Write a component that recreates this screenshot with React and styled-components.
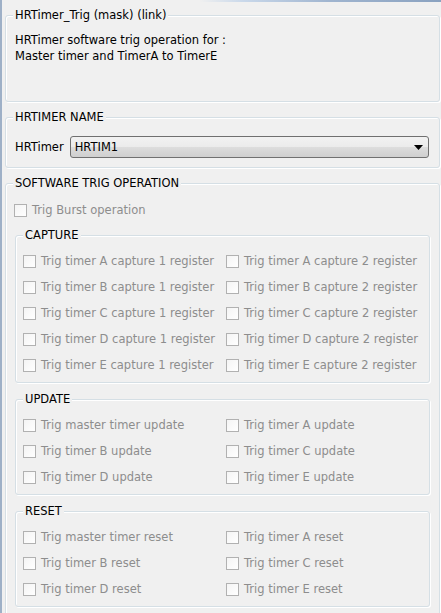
import React from 'react'
import styled, { createGlobalStyle } from 'styled-components'

const GlobalStyle = createGlobalStyle`
  html, body {
    margin: 0;
    padding: 0;
    background: #f0f0f0;
  }
  body {
    font-family: "DejaVu Sans", Tahoma, sans-serif;
    font-size: 11.5px;
    color: #000;
  }
`

const captureRows = ['A', 'B', 'C', 'D', 'E']

const updateItems = [
  'Trig master timer update',
  'Trig timer A update',
  'Trig timer B update',
  'Trig timer C update',
  'Trig timer D update',
  'Trig timer E update',
]

const resetItems = [
  'Trig master timer reset',
  'Trig timer A reset',
  'Trig timer B reset',
  'Trig timer C reset',
  'Trig timer D reset',
  'Trig timer E reset',
]

function Check({ label }) {
  return (
    <CheckRow>
      <Box />
      <CheckLabel>{label}</CheckLabel>
    </CheckRow>
  )
}

export default function App() {
  return (
    <>
      <GlobalStyle />
      <Frame>
        <FrameTop />
        <Page>
          <Group $pad="10px 9px 37px">
            <Title $offset={-2}>HRTimer_Trig (mask) (link)</Title>
            <Info>
              HRTimer software trig operation for :<br />
              Master timer and TimerA to TimerE
            </Info>
          </Group>

          <Group $pad="12px 10px 9px 9px">
            <Title $offset={-2}>HRTIMER NAME</Title>
            <NameRow>
              <span>HRTimer</span>
              <Combo>
                <span>HRTIM1</span>
                <svg width="9" height="5" viewBox="0 0 9 5">
                  <path d="M0 0h9L4.5 5z" fill="#000" />
                </svg>
              </Combo>
            </NameRow>
          </Group>

          <Group $pad="7px 8px 20px 8px" $last>
            <Title $offset={-1}>SOFTWARE TRIG OPERATION</Title>
            <Check label="Trig Burst operation" />

            <SubGroup>
              <Title>CAPTURE</Title>
              <Grid>
                {captureRows.map((t) => (
                  <React.Fragment key={t}>
                    <Check label={`Trig timer ${t} capture 1 register`} />
                    <Check label={`Trig timer ${t} capture 2 register`} />
                  </React.Fragment>
                ))}
              </Grid>
            </SubGroup>

            <SubGroup>
              <Title>UPDATE</Title>
              <Grid>
                {updateItems.map((l) => (
                  <Check key={l} label={l} />
                ))}
              </Grid>
            </SubGroup>

            <SubGroup>
              <Title>RESET</Title>
              <Grid>
                {resetItems.map((l) => (
                  <Check key={l} label={l} />
                ))}
              </Grid>
            </SubGroup>
          </Group>
        </Page>
      </Frame>
    </>
  )
}

const Frame = styled.div`
  border-left: 2px solid #9eb0c7;
  height: 613px;
  overflow: hidden;
  box-sizing: border-box;
`

const FrameTop = styled.div`
  height: 2px;
  background: linear-gradient(to right, rgba(0,0,0,0) 45%, #c9d8ea 55%, #9fb4cf 75%, #8aa2c0 100%);
`

const Page = styled.div`
  padding: 6px 1px 0 3px;
`

const Group = styled.fieldset`
  margin: 0 0 ${(p) => (p.$last ? 0 : 8)}px;
  padding: ${(p) => p.$pad};
  border: 1px solid #d5dfe5;
  border-radius: 3px;
  box-shadow: inset 1px 1px 0 #fff, 1px 1px 0 #fff;
  min-width: 0;
`

const SubGroup = styled.fieldset`
  margin: 5px 1px 4px 1px;
  padding: 6px 7px 4px 7px;
  border: 1px solid #d5dfe5;
  border-radius: 3px;
  box-shadow: inset 1px 1px 0 #fff, 1px 1px 0 #fff;
  min-width: 0;

  & + & {
    margin-top: 9px;
  }
`

const Title = styled.legend`
  margin-left: ${(p) => p.$offset ?? 0}px;
  padding: 0 2px;
  line-height: 14px;
  background: #f0f0f0;
  color: #000;
`

const Info = styled.div`
  line-height: 16px;
`

const NameRow = styled.div`
  display: flex;
  align-items: center;
  gap: 6px;
`

const Combo = styled.div`
  flex: 1;
  height: 22px;
  box-sizing: border-box;
  display: flex;
  align-items: center;
  justify-content: space-between;
  padding: 0 5px 0 4px;
  border: 1px solid #707070;
  border-radius: 3px;
  background: linear-gradient(to bottom, #f2f2f2 0%, #ebebeb 50%, #dddddd 50%, #cfcfcf 100%);
`

const Grid = styled.div`
  display: grid;
  grid-template-columns: 203px 1fr;
`

const CheckRow = styled.div`
  display: flex;
  align-items: center;
  gap: 5px;
  height: 26px;
`

const Box = styled.span`
  width: 13px;
  height: 13px;
  box-sizing: border-box;
  border: 1px solid #b1b1b1;
  background: linear-gradient(135deg, #f4f4f4, #ffffff);
  flex-shrink: 0;
`

const CheckLabel = styled.span`
  color: #8d8d8d;
  white-space: nowrap;
`
